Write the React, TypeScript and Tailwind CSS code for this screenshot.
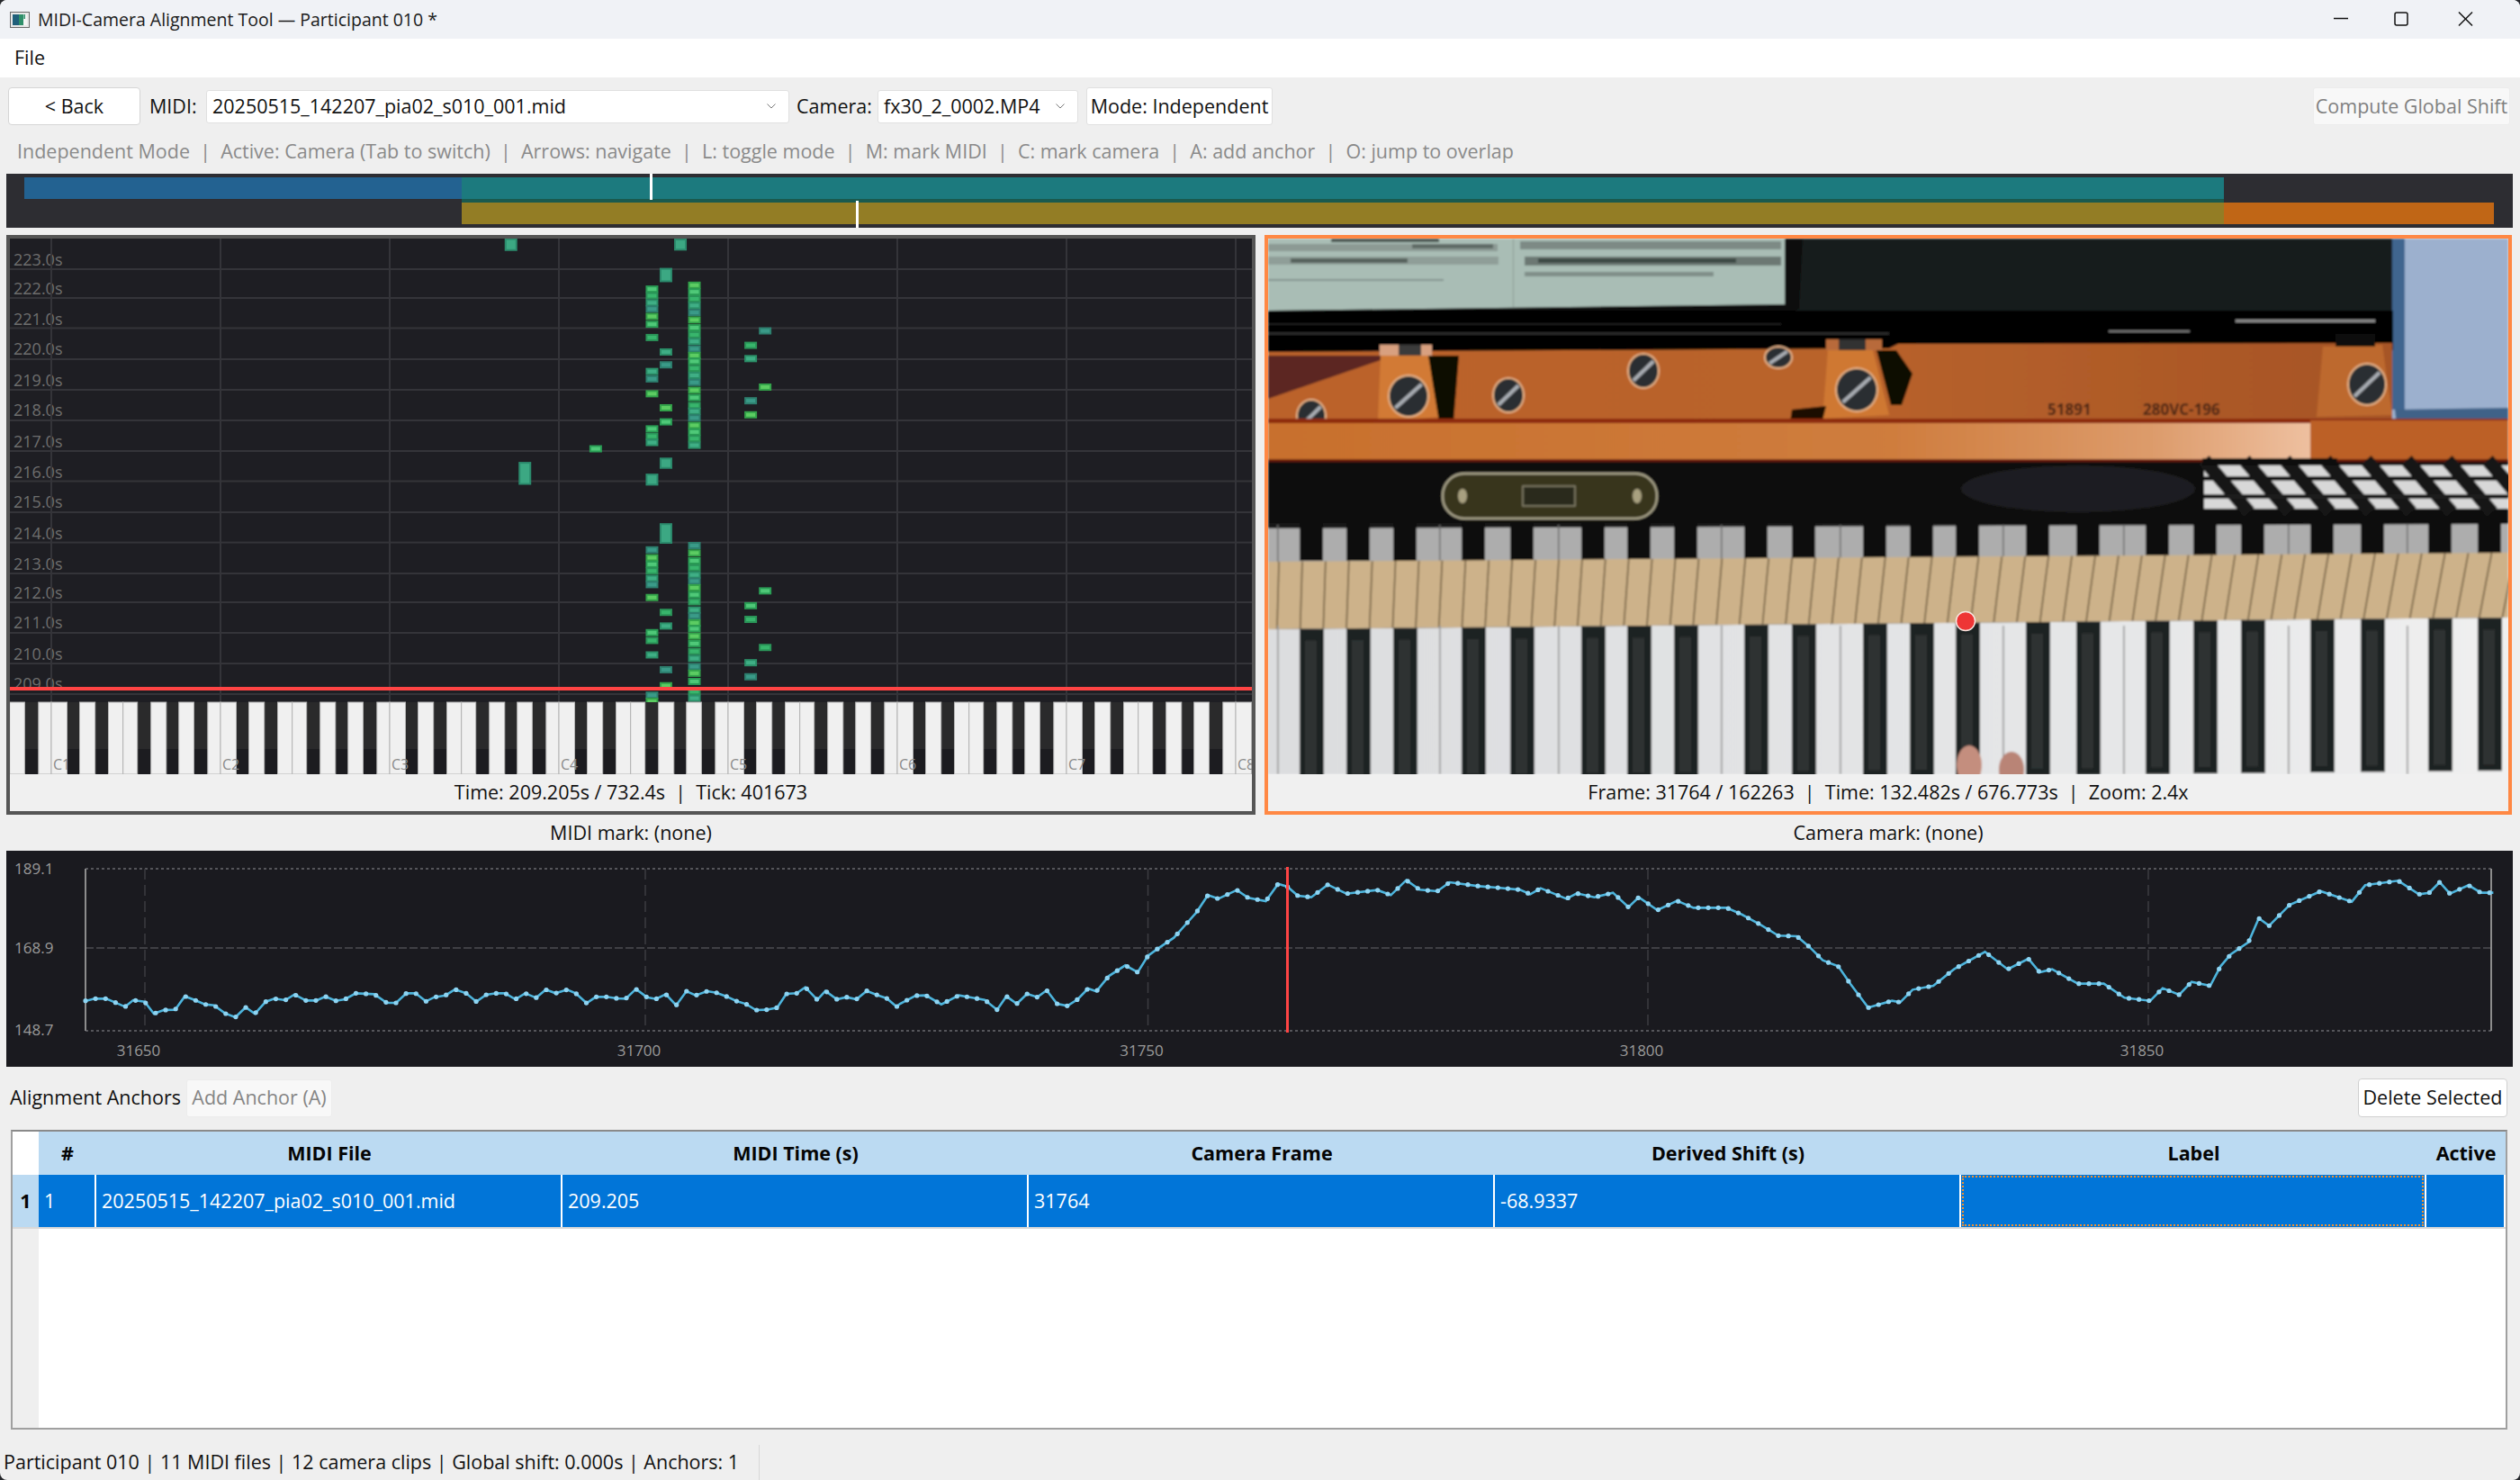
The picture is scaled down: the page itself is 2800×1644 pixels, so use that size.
import React from "react";

// piano roll notes: [x centre, [y centres]] read off the roll at crop scale
const noteColumns: [number, number[]][] = [
  [1262, [141, 158, 176, 192, 211, 231, 265, 352, 371, 409, 499, 518, 534, 809, 829, 846, 863, 882, 898, 931, 1021, 1041, 1078, 1181, 1197]],
  [1289, [302, 335, 445, 481, 969, 1004, 1116, 1157]],
  [1344, [131, 148, 166, 183, 201, 220, 240, 258, 275, 294, 311, 326, 344, 362, 380, 400, 419, 439, 454, 471, 490, 507, 524, 541, 798, 817, 837, 855, 873, 889, 906, 924, 942, 963, 978, 996, 1011, 1030, 1049, 1069, 1087, 1108, 1125, 1146, 1172, 1189]],
  [1453, [285, 319, 427, 463, 952, 987, 1098, 1134]],
  [1481, [248, 392, 914, 1059]],
  [1153, [550]],
];
const bigNotes: [number, number, number][] = [
  [989, 27, 28],
  [1317, 27, 26],
  [1289, 105, 32],
  [1016, 613, 54],
  [1289, 587, 24],
  [1262, 629, 26],
  [1289, 767, 48],
];
const notePalette = [
  ["#2a9d55", "#4fc878"],
  ["#2b8f68", "#3fae85"],
  ["#33a24a", "#5ccc62"],
  ["#2a9458", "#38b56c"],
  ["#2d7f6e", "#3a9a88"],
];
const timeLabels = [223, 222, 221, 220, 219, 218, 217, 216, 215, 214, 213, 212, 211, 210, 209];
const labelCentres = [67, 140, 218, 296, 375, 453, 532, 610, 688, 767, 846, 919, 997, 1076, 1153];
const gridY = [299, 331, 364.5, 399, 433, 467, 501, 534.5, 569, 602.6, 637, 669, 703, 737, 771];

// white key strips inside one octave, offset from the C line
const octaveKeys = [
  [0, 17.5],
  [31.5, 48.7],
  [63.5, 79.7],
  [79.7, 95.7],
  [110.7, 127.8],
  [141.7, 158.4],
  [173.8, 188],
];

// curve points from the two chart crops
const curveA = [150,515,165,508,185,508,200,520,218,535,232,513,252,518,268,558,285,546,305,545,322,500,340,513,357,527,373,530,392,557,410,570,428,537,444,558,463,518,478,508,497,513,513,494,533,514,551,514,567,501,585,515,601,510,620,490,652,493,674,522,690,522,708,490,724,490,742,517,757,503,776,497,793,477,812,490,830,518,847,495,865,490,880,490,898,510,915,490,934,505,951,478,968,490,988,478,1003,490,1022,523,1038,502,1056,502,1075,507,1090,508,1108,476,1127,503,1143,509,1160,493,1178,530,1196,483,1212,497,1232,483,1248,488,1265,500,1283,516,1300,526,1317,546,1335,545,1354,538,1370,492,1388,490,1403,470,1424,512,1438,482,1458,510,1475,503,1492,510,1510,482,1530,497,1545,507,1562,535];
const curveB = [0,525,15,498,25,497,40,527,57,497,70,505,82,512,94,545,103,500,113,525,123,492,133,503,142,480,152,525,162,532,172,510,182,474,190,484,202,433,218,397,230,420,240,365,250,340,265,305,278,255,287,220,298,163,308,175,326,146,337,172,354,183,366,125,375,135,385,165,398,170,414,128,432,158,462,146,475,163,490,113,503,145,520,150,532,120,560,133,578,138,600,145,610,160,620,140,645,175,655,157,672,170,690,155,705,203,715,170,733,213,752,182,768,205,800,205,815,228,833,262,850,298,868,300,880,335,893,380,908,400,920,460,937,538,960,515,968,520,980,478,1000,465,1020,410,1050,352,1072,410,1092,375,1103,420,1115,410,1140,458,1165,458,1185,505,1210,515,1222,473,1238,495,1250,452,1268,465,1278,400,1288,360,1305,320,1315,240,1325,265,1345,195,1375,150,1405,185,1418,130,1450,115,1470,160,1480,155,1490,120,1500,158,1518,130,1530,155,1542,155];

function curvePoints() {
  const pts: [number, number][] = [];
  for (let i = 0; i < curveA.length; i += 2) pts.push([curveA[i] / 1.568 - 7, curveA[i + 1] / 3 - 5]);
  for (let i = 0; i < curveB.length; i += 2) pts.push([1000 + curveB[i] / 0.871 - 7, curveB[i + 1] / 3 - 5]);
  return pts;
}

function sampleFrames(pts: [number, number][]) {
  const out: [number, number][] = [];
  let j = 0;
  for (let f = 0; f <= 240; f++) {
    const x = 88 + f * 11.13;
    while (j < pts.length - 2 && pts[j + 1][0] < x) j++;
    const [x0, y0] = pts[j];
    const [x1, y1] = pts[j + 1];
    const t = Math.min(1, Math.max(0, (x - x0) / (x1 - x0)));
    out.push([x, y0 + (y1 - y0) * t]);
  }
  return out;
}

const blackKeyCentres = [48, 100, 152, 228, 282, 361, 412, 464, 542, 595, 674, 726, 777, 855, 911, 988, 1041, 1094, 1171, 1227, 1302, 1357];
const whiteSplits = [10, 190, 322, 503, 635, 816, 950, 1133, 1265];
const screws: [number, number, number, number][] = [
  [156, 175, 21, 22],
  [654, 168, 22, 23],
  [1221, 162, 20, 22],
  [267, 174, 16, 18],
  [417, 147, 16, 18],
  [567, 132, 14, 11],
  [48, 197, 15, 17],
];

function WindowIcon() {
  return (
    <svg width="22" height="18" viewBox="0 0 22 18">
      <rect x="0.5" y="0.5" width="21" height="17" fill="#e8e8e8" stroke="#6a6a6a" />
      <rect x="3" y="3" width="7" height="12" fill="#1f5f7a" />
      <rect x="10" y="3" width="5" height="12" fill="#2f8f6a" />
      <rect x="15" y="3" width="4" height="12" fill="#f4f4f4" />
      <rect x="15.5" y="3" width="1.5" height="5" fill="#2f8f6a" />
    </svg>
  );
}

function TitleBar() {
  return (
    <div className="h-[43px] flex items-center bg-[#f0f2f6] pl-[11px] shrink-0">
      <WindowIcon />
      <span className="ml-[9px] text-[19.5px] text-[#1a1a1a]">MIDI-Camera Alignment Tool — Participant 010 *</span>
      <div className="ml-auto flex items-center">
        <svg width="190" height="43" viewBox="0 0 190 43" stroke="#111" strokeWidth="1.5" fill="none">
          <line x1="9" y1="20.5" x2="25" y2="20.5" />
          <rect x="77" y="14" width="14" height="14" rx="2" />
          <line x1="148" y1="13.5" x2="163" y2="28.5" />
          <line x1="163" y1="13.5" x2="148" y2="28.5" />
        </svg>
        <div className="w-[26px]" />
      </div>
    </div>
  );
}

function Combo({ text, width }: { text: string; width: string }) {
  return (
    <div className={`${width} h-[37px] bg-white border border-[#e0e0e0] rounded-[3px] flex items-center pl-[6px] pr-[14px] text-[21.5px]`}>
      <span>{text}</span>
      <svg className="ml-auto" width="10" height="6" viewBox="0 0 10 6" fill="none" stroke="#777" strokeWidth="1">
        <polyline points="0.5,0.5 5,5 9.5,0.5" />
      </svg>
    </div>
  );
}

function Toolbar() {
  return (
    <div className="h-[64px] shrink-0 flex items-center pl-[9px] pr-[11px] text-[21.5px]">
      <button className="w-[147px] h-[42px] bg-white border border-[#d5d5d5] rounded-[4px]">&lt; Back</button>
      <span className="ml-[10px] w-[63px]">MIDI:</span>
      <Combo text="20250515_142207_pia02_s010_001.mid" width="w-[648px]" />
      <span className="ml-[8px] w-[90px]">Camera:</span>
      <Combo text="fx30_2_0002.MP4" width="w-[223px]" />
      <button className="ml-[9px] w-[207px] h-[42px] bg-white border border-[#e0e0e0] rounded-[3px]">Mode: Independent</button>
      <button className="ml-auto w-[219px] h-[42px] bg-[#f8f8f8] border border-[#ececec] rounded-[3px] text-[#808080]">
        Compute Global Shift
      </button>
    </div>
  );
}

function Timeline() {
  return (
    <div className="relative mt-[7px] mx-[7px] w-[2785px] h-[60px] shrink-0 bg-[#2d2d32] pt-[4px]">
      <div className="flex h-[24px]">
        <div className="w-[20px]" />
        <div className="w-[486px] bg-[#236291]" />
        <div className="w-[1958px] bg-[#1c7a7e]" />
      </div>
      <div className="flex h-[4px]">
        <div className="w-[506px]" />
        <div className="w-[1958px] bg-[#1a5a4e]" />
      </div>
      <div className="flex h-[24px]">
        <div className="w-[506px]" />
        <div className="w-[1958px] bg-[#937d25]" />
        <div className="w-[300px] bg-[#c06616]" />
      </div>
      <div className="absolute left-[715px] top-0 w-[3px] h-[29px] bg-white" />
      <div className="absolute left-[944px] top-[30px] w-[3px] h-[30px] bg-white" />
    </div>
  );
}

function PianoRoll() {
  const octaves = [-1, 0, 1, 2, 3, 4, 5, 6, 7];
  return (
    <svg width="1380" height="595" viewBox="0 0 1380 595" className="block">
      <rect width="1380" height="515" fill="#1e1e23" />
      {timeLabels.map((t, i) => (
        <text key={t} x="4" y={labelCentres[i] / 2.306 - 5 + 6} fontSize="18" fill="#6e6e6e">
          {t}.0s
        </text>
      ))}
      <rect y="498" width="1380" height="17" fill="#1e1e23" />
      {gridY.map((y) => (
        <rect key={y} y={y - 266} width="1380" height="2" fill="#343439" />
      ))}
      {[0, 1, 2, 3, 4, 5, 6, 7].map((k) => (
        <rect key={k} x={45 + k * 188} width="2" height="515" fill="#343439" />
      ))}
      {noteColumns.map(([zx, ys], c) =>
        ys.map((zy, i) => {
          const [edge, fill] = notePalette[(i * 3 + c + (zy > 1020 && c === 2 ? 4 : 0)) % notePalette.length];
          return (
            <rect
              key={`${zx}-${zy}`}
              x={zx / 1.742 - 11 - 6}
              y={zy / 2.306 - 5 - 3}
              width="12"
              height="6"
              fill={fill}
              stroke={edge}
              strokeWidth="2"
            />
          );
        }),
      )}
      {bigNotes.map(([zx, zy, h]) => (
        <rect
          key={`${zx}-${zy}`}
          x={zx / 1.742 - 11 - 6}
          y={zy / 2.306 - 5 - h / 4.6}
          width="12"
          height={h / 2.306}
          fill="#3ca883"
          stroke="#2b8a6c"
          strokeWidth="2"
        />
      ))}
      <rect y="515" width="1380" height="80" fill="#1c1c20" />
      <rect y="515" width="1380" height="52" fill="#2a2a2b" />
      {octaves.map((o) =>
        octaveKeys.map(([a, b], i) => {
          const x0 = 46 + o * 188 + a;
          return <rect key={`${o}-${i}`} x={x0} y="515" width={b - a} height="80" fill="#f0f0f0" stroke="#b4b4b4" strokeWidth="1" />;
        }),
      )}
      {[1, 2, 3, 4, 5, 6, 7, 8].map((n) => (
        <text key={n} x={48 + (n - 1) * 188} y="590" fontSize="16" fill="#8a8a8a">
          C{n}
        </text>
      ))}
      <rect y="498" width="1380" height="4" fill="#ff4444" />
    </svg>
  );
}

function CameraFrame() {
  const slats = Array.from({ length: 54 }, (_, i) => i);
  return (
    <svg width="1378" height="595" viewBox="0 0 1378 595" className="block">
      <defs>
        <filter id="soft" x="0" y="0" width="100%" height="100%">
          <feGaussianBlur stdDeviation="0.8" />
        </filter>
        <linearGradient id="bar" x1="0" x2="1" y1="0" y2="0">
          <stop offset="0" stopColor="#c8702d" />
          <stop offset="0.6" stopColor="#cf7d3e" />
          <stop offset="0.85" stopColor="#dd9c6c" />
          <stop offset="1" stopColor="#eec0a0" />
        </linearGradient>
        <linearGradient id="plate" x1="0" x2="1" y1="0" y2="0">
          <stop offset="0" stopColor="#bb622a" />
          <stop offset="0.5" stopColor="#b9632c" />
          <stop offset="1" stopColor="#a65425" />
        </linearGradient>
        <linearGradient id="white" x1="0" x2="1" y1="0" y2="0">
          <stop offset="0" stopColor="#dcdddf" />
          <stop offset="0.7" stopColor="#e6e7e8" />
          <stop offset="1" stopColor="#f0f0f0" />
        </linearGradient>
      </defs>
      <g filter="url(#soft)">
        <rect width="1378" height="595" fill="#0a0a0a" />
        {/* sheet music */}
        <polygon points="0,0 574,0 574,73 0,80" fill="#a9bdb5" />
        <rect x="574" width="680" height="82" fill="#191b1a" />
        <polygon points="574,0 594,0 590,78 574,84" fill="#0d0d0d" />
        <rect x="0" y="6" width="255" height="8" fill="#8c9a94" />
        <rect x="70" y="0" width="120" height="4" fill="#4a5450" />
        <rect x="160" y="6" width="90" height="5" fill="#5f6a66" />
        <rect x="0" y="20" width="256" height="9" fill="#8f9e98" />
        <rect x="25" y="22" width="130" height="5" fill="#56625d" />
        <rect x="0" y="45" width="195" height="2" fill="#82918b" />
        <rect x="272" width="1" height="76" fill="#8a9a93" />
        <rect x="280" y="3" width="290" height="9" fill="#7d8a85" />
        <rect x="285" y="20" width="285" height="10" fill="#6c7873" />
        <rect x="300" y="22" width="220" height="5" fill="#3e4844" />
        <rect x="285" y="37" width="210" height="5" fill="#7f8e88" />
        {/* blue book */}
        <rect x="1249" width="129" height="206" fill="#9cb0ce" />
        <rect x="1249" width="14" height="190" fill="#41658f" />
        <polygon points="1252,190 1378,188 1378,206 1254,207" fill="#3f6288" />
        {/* dark band above the plate */}
        <rect x="0" y="80" width="1250" height="44" fill="#060606" />
        <rect x="0" y="104" width="690" height="3" fill="#2c2c2c" />
        <rect x="0" y="94" width="570" height="2" fill="#1e1e1e" />
        <rect x="934" y="102" width="90" height="2" fill="#777" />
        <rect x="1075" y="90" width="155" height="3" fill="#8a8a8a" />
        {/* copper plate */}
        <polygon points="0,126 690,122 700,117 1249,116 1249,202 0,206" fill="url(#plate)" />
        <polygon points="0,130 140,130 0,178" fill="#5c2622" />
        <polygon points="125,130 180,130 190,198 122,204" fill="#d27a35" />
        <rect x="124" y="118" width="58" height="12" fill="#d8a080" />
        <rect x="145" y="118" width="25" height="12" fill="#3a3a3a" />
        <polygon points="178,130 212,130 206,204 190,204" fill="#0c0806" />
        <polygon points="622,124 672,124 690,196 616,200" fill="#cf7833" />
        <rect x="620" y="112" width="62" height="12" fill="#b86a3a" />
        <rect x="634" y="112" width="30" height="12" fill="#333" />
        <polygon points="676,124 698,124 716,150 704,185 692,185" fill="#0b0806" />
        <polygon points="582,190 620,186 616,202 580,204" fill="#1a0c06" />
        <polygon points="1172,120 1238,118 1249,196 1165,198" fill="#bd692e" />
        <rect x="1186" y="106" width="44" height="14" fill="#111" />
        {screws.map(([x, y, rx, ry]) => (
          <g key={x}>
            <ellipse cx={x} cy={y} rx={rx + 2} ry={ry + 2} fill="#e8b48a" />
            <ellipse cx={x} cy={y} rx={rx} ry={ry} fill="#2b2e33" />
            <line x1={x - rx * 0.7} y1={y + ry * 0.6} x2={x + rx * 0.7} y2={y - ry * 0.6} stroke="#a9adb3" strokeWidth="4" />
          </g>
        ))}
        <text x="866" y="196" fontSize="17" fill="#4c2514" fontWeight="bold">51891</text>
        <text x="972" y="196" fontSize="17" fill="#4c2514" fontWeight="bold">280VC-196</text>
        {/* orange bar */}
        <rect y="200" width="1378" height="5" fill="#8d2c10" />
        <rect y="205" width="1160" height="41" fill="url(#bar)" />
        <rect x="1158" y="202" width="220" height="43" fill="#bc6125" />
        <rect y="245" width="1378" height="3" fill="#6a1c0a" />
        {/* fallboard with lock plate and window reflection */}
        <rect y="248" width="1378" height="68" fill="#0b0b0b" />
        <ellipse cx="900" cy="278" rx="130" ry="26" fill="#1f1f20" />
        <rect x="1040" y="252" width="338" height="48" fill="#d8d8d8" />
        {[1040, 1085, 1130, 1175, 1220, 1265, 1310, 1355].map((x) => (
          <line key={x} x1={x} y1="246" x2={x + 50} y2="304" stroke="#161616" strokeWidth="15" />
        ))}
        <rect x="1040" y="264" width="338" height="5" fill="#161616" />
        <rect x="1040" y="284" width="338" height="5" fill="#1c1c1c" />
        <rect x="1038" y="244" width="150" height="8" fill="#0b0b0b" />
        <rect x="194" y="261" width="238" height="50" rx="24" fill="#39341f" stroke="#a8a38a" strokeWidth="2.5" />
        <ellipse cx="216" cy="286" rx="5" ry="8" fill="#a8a080" />
        <ellipse cx="410" cy="286" rx="5" ry="8" fill="#a8a080" />
        <rect x="283" y="275" width="58" height="22" fill="#2c2a1c" stroke="#8a8672" strokeWidth="1.5" />
        {/* back of the keys */}
        <rect y="316" width="1378" height="6" fill="#181818" />
        <polygon points="0,322 1378,317 1378,352 0,360" fill="#adadad" />
        {whiteSplits.map((x) => (
          <rect key={x} x={x} y="318" width="1.5" height="42" fill="#6a6a6a" />
        ))}
        {blackKeyCentres.map((x) => (
          <rect key={x} x={x - 13} y="316" width="26" height="42" fill="#111" />
        ))}
        {/* tan key tops */}
        <polygon points="0,359 1378,349 1378,421 0,434" fill="#cdb28a" />
        {slats.map((i) => {
          const x = 10 + i * 25.8;
          const t = x / 1378;
          const topY = 359 - 10 * t;
          const botY = 434 - 13 * t;
          return <line key={i} x1={x + 6 * t + 2} y1={topY} x2={x - 6 * t} y2={botY} stroke="#6d5a3c" strokeWidth="1.6" />;
        })}
        {/* front of the keys */}
        <polygon points="0,434 1378,421 1378,595 0,595" fill="url(#white)" />
        {whiteSplits.map((x) => (
          <rect key={x} x={x} y="430" width="1.8" height="165" fill="#9c9c9c" />
        ))}
        {blackKeyCentres.map((x) => (
          <g key={x}>
            <rect x={x - 13} y={434 - (13 * x) / 1378} width="27" height="170" fill="#1d2020" />
            <rect x={x - 7} y={447 - (13 * x) / 1378} width="13" height="150" fill="#2e3232" />
          </g>
        ))}
        {/* fingers */}
        <ellipse cx="779" cy="585" rx="14" ry="22" fill="#c48e7e" />
        <ellipse cx="826" cy="590" rx="14" ry="20" fill="#b98476" />
      </g>
      <circle cx="775" cy="425" r="10.5" fill="#ee3535" stroke="#f6e6e0" strokeWidth="1.5" />
    </svg>
  );
}

function Panels() {
  return (
    <div className="flex ml-[7px] mt-[8px] h-[644px] shrink-0 gap-[10px] text-[#111] text-[21.5px]">
      <div className="w-[1388px] border-[4px] border-[#555555] bg-[#f0f0f0] flex flex-col">
        <PianoRoll />
        <div className="flex-1 flex items-center justify-center">Time: 209.205s / 732.4s&nbsp;&nbsp;|&nbsp;&nbsp;Tick: 401673</div>
      </div>
      <div className="w-[1386px] border-[4px] border-[#ff8844] bg-[#f0f0f0] flex flex-col">
        <CameraFrame />
        <div className="flex-1 flex items-center justify-center">
          Frame: 31764 / 162263&nbsp;&nbsp;|&nbsp;&nbsp;Time: 132.482s / 676.773s&nbsp;&nbsp;|&nbsp;&nbsp;Zoom: 2.4x
        </div>
      </div>
    </div>
  );
}

function ShiftChart() {
  const pts = curvePoints();
  const dots = sampleFrames(pts);
  const lines = [154, 710, 1268.5, 1824, 2380];
  const frames = ["31650", "31700", "31750", "31800", "31850"];
  return (
    <svg width="2785" height="240" viewBox="0 0 2785 240" className="block ml-[7px] shrink-0">
      <rect width="2785" height="240" fill="#1a1a1f" />
      <line x1="88" y1="20" x2="2761" y2="20" stroke="#55555a" strokeWidth="2" strokeDasharray="3 3" />
      <line x1="88" y1="200" x2="2761" y2="200" stroke="#55555a" strokeWidth="2" strokeDasharray="3 3" />
      <line x1="88" y1="108" x2="2761" y2="108" stroke="#3f3f44" strokeWidth="2" strokeDasharray="9 3" />
      {lines.map((x) => (
        <line key={x} x1={x} y1="20" x2={x} y2="200" stroke="#3c3c41" strokeWidth="1.5" strokeDasharray="12 6" />
      ))}
      <line x1="88" y1="20" x2="88" y2="200" stroke="#8c8c8c" strokeWidth="2" />
      <line x1="2761" y1="20" x2="2761" y2="200" stroke="#8c8c8c" strokeWidth="2" />
      <polyline points={pts.map((p) => p.join(",")).join(" ")} fill="none" stroke="#4cb4dc" strokeWidth="2.6" />
      {dots.map(([x, y]) => (
        <circle key={x} cx={x} cy={y} r="2.6" fill="#8ed4f2" />
      ))}
      <rect x="1422" y="18" width="3" height="184" fill="#ff4444" />
      {[["189.1", 26], ["168.9", 114], ["148.7", 205]].map(([t, y]) => (
        <text key={t} x="9" y={y} fontSize="17" fill="#9a9a9a">
          {t}
        </text>
      ))}
      {frames.map((t, i) => (
        <text key={t} x={lines[i] - 7} y="228" fontSize="17" fill="#9a9a9a" textAnchor="middle">
          {t}
        </text>
      ))}
    </svg>
  );
}

function AnchorBar() {
  return (
    <div className="flex items-center mt-[13px] h-[43px] shrink-0 pl-[11px] pr-[14px] text-[21.5px]">
      <span className="text-[#111] w-[196px]">Alignment Anchors</span>
      <button className="w-[162px] h-[42px] bg-[#f8f8f8] border border-[#ececec] rounded-[3px] text-[#858585]">Add Anchor (A)</button>
      <button className="ml-auto w-[166px] h-[43px] bg-white border border-[#d0d0d0] rounded-[4px]">Delete Selected</button>
    </div>
  );
}

function AnchorsTable() {
  const headers = ["#", "MIDI File", "MIDI Time (s)", "Camera Frame", "Derived Shift (s)", "Label", "Active"];
  const cells = ["1", "20250515_142207_pia02_s010_001.mid", "209.205", "31764", "-68.9337"];
  const columns = "grid grid-cols-[29px_64px_518px_518px_518px_518px_517px_88px]";
  return (
    <div className="ml-[12px] mt-[14px] w-[2774px] h-[333px] shrink-0 border-2 border-[#a0a0a0] border-t-[#8a8a8a] bg-white flex flex-col text-[21.5px]">
      <div className={`${columns} h-[48px] shrink-0`}>
        <div className="bg-white" />
        {headers.map((h) => (
          <div key={h} className="bg-[#bbdaf2] flex items-center justify-center font-bold text-[#050505]">
            {h}
          </div>
        ))}
      </div>
      <div className={`${columns} h-[60px] shrink-0 border-b-2 border-[#d8d8d8]`}>
        <div className="bg-[#bbdaf2] flex items-center justify-center font-bold text-[#050505]">1</div>
        {cells.map((c) => (
          <div key={c} className="bg-[#0175d8] border-r-2 border-white flex items-center pl-[6px] text-white">
            {c}
          </div>
        ))}
        <div className="bg-[#0175d8] border-r-2 border-white p-[1px]">
          <div className="h-full border-2 border-dotted border-[#f09030]" />
        </div>
        <div className="bg-[#0175d8] border-r-2 border-white" />
      </div>
      <div className="flex-1 flex">
        <div className="w-[29px] bg-[#efefef]" />
      </div>
    </div>
  );
}

function StatusBar() {
  return (
    <div className="mt-auto h-[39px] flex items-center text-[21.5px] text-[#111]">
      <div className="h-full w-[844px] pl-[4px] flex items-center border-r border-[#d8d8d8]">
        Participant 010 | 11 MIDI files | 12 camera clips | Global shift: 0.000s | Anchors: 1
      </div>
    </div>
  );
}

export default function App() {
  return (
    <div className="w-[2800px] h-[1644px] bg-[#26282c] [font-family:'Open_Sans',sans-serif]">
      <div className="w-full h-full rounded-[8px] overflow-hidden bg-[#efefef] flex flex-col text-[#111]">
        <TitleBar />
        <div className="h-[43px] shrink-0 bg-white flex items-center pl-[16px] text-[21.5px]">File</div>
        <Toolbar />
        <div className="h-[36px] shrink-0 flex items-center pl-[19px] text-[21.5px] text-[#8a8a8a] whitespace-pre">
          {"Independent Mode  |  Active: Camera (Tab to switch)  |  Arrows: navigate  |  L: toggle mode  |  M: mark MIDI  |  C: mark camera  |  A: add anchor  |  O: jump to overlap"}
        </div>
        <Timeline />
        <Panels />
        <div className="h-[40px] shrink-0 flex ml-[7px] gap-[10px] text-[21.5px]">
          <div className="w-[1388px] flex items-center justify-center">MIDI mark: (none)</div>
          <div className="w-[1386px] flex items-center justify-center">Camera mark: (none)</div>
        </div>
        <ShiftChart />
        <AnchorBar />
        <AnchorsTable />
        <StatusBar />
      </div>
    </div>
  );
}
